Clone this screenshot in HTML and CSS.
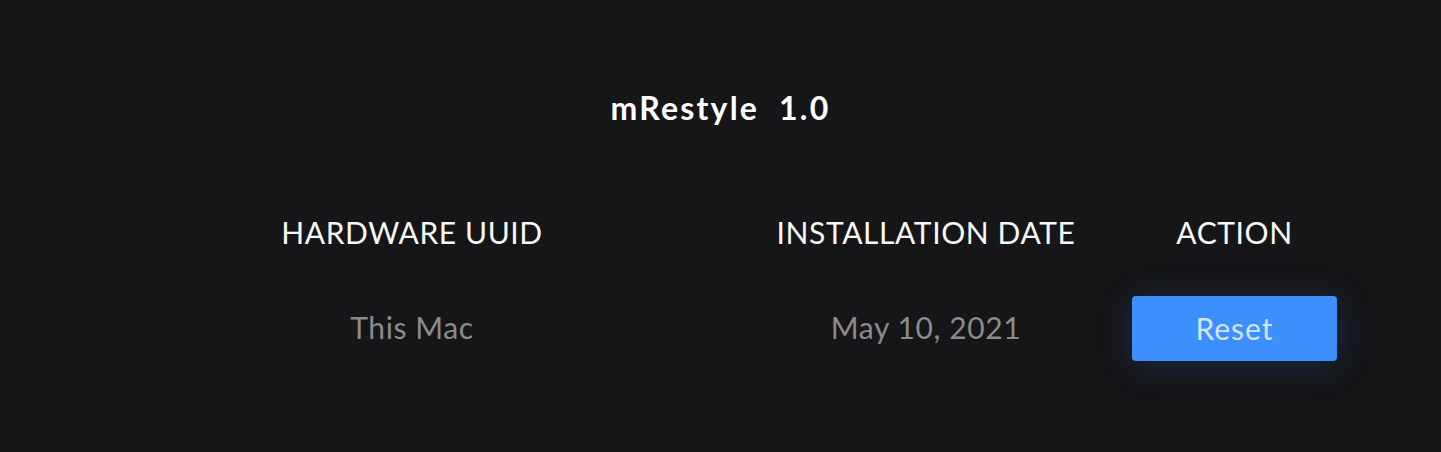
FILE: index.html
```html
<!DOCTYPE html>
<html>
<head>
<meta charset="utf-8">
<link rel="stylesheet" href="styles.css">
</head>
<body>
<main class="page">
  <h1 class="title">mRestyle&nbsp;&nbsp;1.0</h1>
  <div class="table">
    <div class="cell head">HARDWARE UUID</div>
    <div class="cell head">INSTALLATION DATE</div>
    <div class="cell head">ACTION</div>
    <div class="cell value">This Mac</div>
    <div class="cell value">May 10, 2021</div>
    <div class="cell action"><button class="reset">Reset</button></div>
  </div>
</main>
</body>
</html>
```
FILE: styles.css
```css
html, body {
  margin: 0;
  padding: 0;
  background: #161618;
  height: 100%;
}
body {
  font-family: Lato, "Noto Sans", sans-serif;
}
.page {
  padding-top: 88px;
}
.title {
  margin: 0;
  text-align: center;
  font-size: 32px;
  font-weight: 700;
  letter-spacing: 2.2px;
  line-height: 40px;
  color: #ffffff;
}
.table {
  display: grid;
  grid-template-columns: 616px 412px 205px;
  grid-template-rows: 64px 65px;
  row-gap: 32px;
  margin-top: 72px;
  margin-left: 104px;
  width: max-content;
}
.cell {
  display: flex;
  align-items: center;
  justify-content: center;
  font-size: 30px;
  letter-spacing: 0.6px;
}
.head {
  color: #f7f7f7;
}
.value {
  color: #8b8b8c;
  padding-bottom: 4px;
}
.reset {
  width: 205px;
  height: 65px;
  border: none;
  border-radius: 4px;
  background: #3d8ffe;
  color: #d2e3fa;
  font-family: Lato, "Noto Sans", sans-serif;
  font-size: 30px;
  letter-spacing: 1px;
  padding: 0 0 2px;
  box-shadow: 0 4px 34px rgba(40, 90, 180, 0.28);
  cursor: pointer;
}
```
